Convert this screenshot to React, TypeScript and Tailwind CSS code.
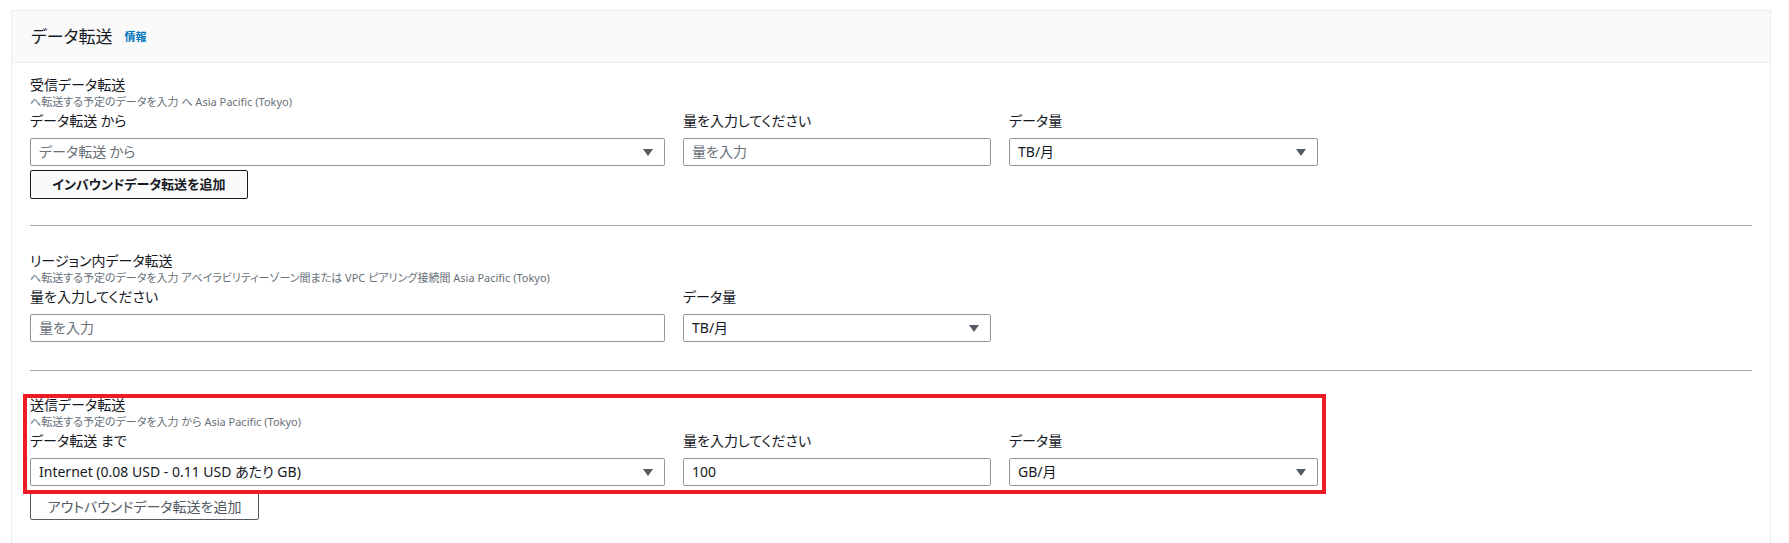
const font = "font-['Noto_Sans','Noto_Sans_CJK_JP',sans-serif] [font-feature-settings:'palt']";

function Arrow() {
  return (
    <svg width="10" height="7" viewBox="0 0 10 7" className="shrink-0">
      <polygon points="0,0 10,0 5,7" fill="#545b64" />
    </svg>
  );
}

function SelectBox({ value, placeholder }: { value?: string; placeholder?: string }) {
  return (
    <div className="flex h-[28px] w-full items-center justify-between rounded-[2px] border border-[#8d999a] bg-white pl-[8px] pr-[11px]">
      <span className={`text-[14px] leading-none ${value ? 'text-[#16191f]' : 'text-[#687078]'}`}>{value ?? placeholder}</span>
      <Arrow />
    </div>
  );
}

function InputBox({ value, placeholder }: { value?: string; placeholder?: string }) {
  return (
    <div className="flex h-[28px] w-full items-center rounded-[2px] border border-[#8d999a] bg-white pl-[8px]">
      <span className={`text-[14px] leading-none ${value ? 'text-[#16191f]' : 'text-[#687078]'}`}>{value ?? placeholder}</span>
    </div>
  );
}

function Field({ label, width, children }: { label: string; width: string; children: React.ReactNode }) {
  return (
    <div className={`flex flex-col ${width}`}>
      <div className="h-[22px] text-[14px] leading-[22px] text-[#16191f]">{label}</div>
      <div className="mt-[6px]">{children}</div>
    </div>
  );
}

function SectionHead({ title, sub }: { title: string; sub: string }) {
  return (
    <>
      <div className="text-[14px] leading-[18px] text-[#16191f]">{title}</div>
      <div className="text-[11px] leading-[16px] text-[#687078]">{sub}</div>
    </>
  );
}

export default function App() {
  return (
    <div className={`min-h-screen bg-white pl-[11px] pr-[18px] pt-[10px] ${font}`}>
      <div className="border border-b-0 border-[#eaeded] min-h-[560px]">
        <div className="flex h-[52px] items-center border-b border-[#eaeded] bg-[#fafafa] pl-[19px]">
          <span className="text-[17px] leading-none text-[#16191f]">データ転送</span>
          <span className="ml-[12px] text-[11px] font-bold leading-none text-[#0073bb]">情報</span>
        </div>

        <div className="px-[18px]">
          {/* inbound */}
          <div className="pt-[13px] pb-[26px]">
            <SectionHead title="受信データ転送" sub="へ転送する予定のデータを入力 へ Asia Pacific (Tokyo)" />
            <div className="flex gap-[18px]">
              <Field label="データ転送 から" width="w-[635px]">
                <SelectBox placeholder="データ転送 から" />
              </Field>
              <Field label="量を入力してください" width="w-[308px]">
                <InputBox placeholder="量を入力" />
              </Field>
              <Field label="データ量" width="w-[309px]">
                <SelectBox value="TB/月" />
              </Field>
            </div>
            <button className="mt-[4px] h-[29px] w-[218px] rounded-[2px] border border-[#16191f] bg-[#fafafa] text-[13px] font-bold leading-none text-[#16191f]">
              インバウンドデータ転送を追加
            </button>
          </div>

          <div className="h-px bg-[#a6a6a6]" />

          {/* intra-region */}
          <div className="pt-[26px] pb-[28px]">
            <SectionHead
              title="リージョン内データ転送"
              sub="へ転送する予定のデータを入力 アベイラビリティーゾーン間または VPC ピアリング接続間 Asia Pacific (Tokyo)"
            />
            <div className="flex gap-[18px]">
              <Field label="量を入力してください" width="w-[635px]">
                <InputBox placeholder="量を入力" />
              </Field>
              <Field label="データ量" width="w-[308px]">
                <SelectBox value="TB/月" />
              </Field>
            </div>
          </div>

          <div className="h-px bg-[#a6a6a6]" />

          {/* outbound */}
          <div className="relative pt-[25px] pb-[30px]">
            <SectionHead title="送信データ転送" sub="へ転送する予定のデータを入力 から Asia Pacific (Tokyo)" />
            <div className="flex gap-[18px]">
              <Field label="データ転送 まで" width="w-[635px]">
                <SelectBox value="Internet (0.08 USD - 0.11 USD あたり GB)" />
              </Field>
              <Field label="量を入力してください" width="w-[308px]">
                <InputBox value="100" />
              </Field>
              <Field label="データ量" width="w-[309px]">
                <SelectBox value="GB/月" />
              </Field>
            </div>
            <button className="mt-[7px] h-[27px] w-[229px] rounded-[2px] border border-[#545b64] bg-white text-[14px] leading-none text-[#545b64]">
              アウトバウンドデータ転送を追加
            </button>
            <div className="pointer-events-none absolute left-[-7px] top-[23px] h-[100px] w-[1303px] border-4 border-[#ed1c24]" />
          </div>
        </div>
      </div>
    </div>
  );
}
